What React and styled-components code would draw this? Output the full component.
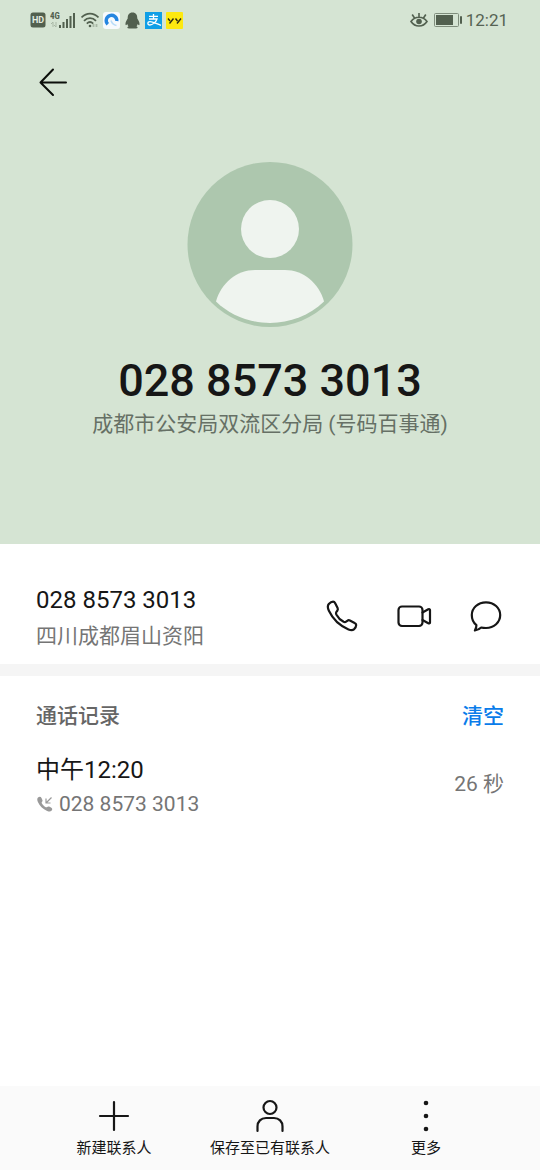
import styled, { createGlobalStyle } from "styled-components";

const acoes = [
    { nome: "语音通话", icone: <PhoneIcon /> },
    { nome: "视频通话", icone: <VideoIcon /> },
    { nome: "发送信息", icone: <MessageIcon /> },
]

const menu = [
    { nome: "新建联系人", icone: <PlusIcon /> },
    { nome: "保存至已有联系人", icone: <PersonIcon /> },
    { nome: "更多", icone: <MoreIcon /> },
]

const registros = [
    { hora: "中午12:20", numero: "028 8573 3013", duracao: "26 秒" },
]

export default function App() {
    return (
        <>
        <GlobalStyle />
        <Page>
            <Header>
                <StatusBar />
                <BackButton type="button" aria-label="返回"><BackIcon /></BackButton>
                <Profile>
                    <Avatar />
                    <Title>028 8573 3013</Title>
                    <Subtitle>成都市公安局双流区分局 (号码百事通)</Subtitle>
                </Profile>
            </Header>
            <NumberRow>
                <div>
                    <MainText>028 8573 3013</MainText>
                    <SmallText>四川成都眉山资阳</SmallText>
                </div>
                <Actions>
                    {acoes.map((acao) => (
                        <ActionButton key={acao.nome} type="button" aria-label={acao.nome}>{acao.icone}</ActionButton>
                    ))}
                </Actions>
            </NumberRow>
            <History>
                <HistoryHeader>
                    <HistoryTitle>通话记录</HistoryTitle>
                    <ClearButton type="button">清空</ClearButton>
                </HistoryHeader>
                {registros.map((registro) => (
                    <Call key={registro.hora}>
                        <div>
                            <MainText>{registro.hora}</MainText>
                            <CallNumber><IncomingIcon />{registro.numero}</CallNumber>
                        </div>
                        <SmallText>{registro.duracao}</SmallText>
                    </Call>
                ))}
            </History>
            <Footer>
                {menu.map((item) => (
                    <FooterButton key={item.nome} type="button">{item.icone}{item.nome}</FooterButton>
                ))}
            </Footer>
        </Page>
        </>
    )
}

function StatusBar() {
    return (
        <Status>
            <StatusGroup>
                <svg width="16" height="16" viewBox="0 0 16 16">
                    <rect x="0.5" y="0.5" width="15" height="15" rx="2.5" fill="#52604f" />
                    <text x="8" y="11" textAnchor="middle" fontSize="9" fontWeight="700" fill="#e2ece0">HD</text>
                </svg>
                <svg width="27" height="18" viewBox="0 0 27 18" fill="#52604f">
                    <text x="0" y="8" fontSize="9" fontWeight="700" fontFamily="Roboto Condensed, Roboto">4G</text>
                    <path d="M1 13l2-2v5M6 11v5l-2-2" fill="none" stroke="#a9b8a6" />
                    <rect x="9" y="14" width="2" height="3" />
                    <rect x="12.5" y="11" width="2" height="6" />
                    <rect x="16" y="8" width="2" height="9" />
                    <rect x="19.5" y="5" width="2" height="12" />
                    <rect x="23" y="2" width="2" height="15" />
                </svg>
                <svg width="18" height="16" viewBox="0 0 18 16" fill="none" stroke="#52604f" strokeWidth="1.8">
                    <path d="M0.5 5.5C5.5.3 12.5.3 17.5 5.5M3 8.8c3.5-3.6 8.5-3.6 12 0M5.800 11.600c2-2 4.400-2 6.400 0" />
                    <circle cx="9" cy="14" r="1.3" fill="#52604f" stroke="none" />
                    <path d="M12.5 12v3M15.5 12v3" stroke="#a9b8a6" />
                </svg>
                <svg width="17" height="17" viewBox="0 0 17 17">
                    <rect width="17" height="17" rx="3" fill="#f7fafd" />
                    <path d="M4.8 12.300A5.300 5.300 0 1 1 13.800 9" fill="none" stroke="#2686e0" strokeWidth="3.4" />
                    <path d="M8 8.500c1 3 3 4.500 5.500 5" fill="none" stroke="#b9dcf8" strokeWidth="1.6" />
                </svg>
                <svg width="17" height="17" viewBox="0 0 17 17" fill="#52604f">
                    <path d="M8.500.5C5 .5 3.600 3 3.700 6.500 2.500 8.300 1.200 10.500 1.500 12.800c.4.800 1.200.2 1.800-.8.2.9.6 1.600 1.200 2.200-1.800.7-1.500 2.300.7 2.300h6.600c2.200 0 2.500-1.600.7-2.300.6-.6 1-1.300 1.200-2.200.6 1 1.400 1.600 1.800.8.3-2.300-1-4.500-2.200-6.300C13.400 3 12 .5 8.500.5z" />
                </svg>
                <svg width="17" height="17" viewBox="0 0 17 17">
                    <rect width="17" height="17" fill="#109fe6" />
                    <path d="M4 4.300h9M8.500 2v5M4 7h8C11 10 7.500 13 4.800 13c-2.600 0-2.600-3.300.2-3.300 3 0 6 2 11 3.600" fill="none" stroke="#fff" strokeWidth="1.3" />
                </svg>
                <svg width="17" height="17" viewBox="0 0 17 17">
                    <rect width="17" height="17" rx="1" fill="#fde910" />
                    <path d="M2 6.500l2 2.500M7.500 6.500L3.500 11.500M9.500 6.500l2 2.500M15 6.500l-4 5" fill="none" stroke="#2b2a12" strokeWidth="1.4" />
                </svg>
            </StatusGroup>
            <StatusGroup>
                <svg width="18" height="16" viewBox="0 0 18 16" fill="none" stroke="#52604f" strokeWidth="1.6">
                    <path d="M1 9.500C5 3.800 13 3.800 17 9.500 13 15.500 5 15.500 1 9.500zM9 5V1M4.500 6L2.200 2.500M13.500 6l2.300-3.500" />
                    <circle cx="9" cy="9.500" r="2.8" fill="#52604f" stroke="none" />
                </svg>
                <svg width="30" height="16" viewBox="0 0 30 16">
                    <rect x="2.5" y="1.5" width="24" height="13" rx="1" fill="none" stroke="#7f8d7c" />
                    <rect x="4" y="3" width="17" height="10" fill="#52604f" />
                    <rect x="28" y="4" width="2" height="8" rx="1" fill="#52604f" />
                </svg>
                <Clock>12:21</Clock>
            </StatusGroup>
        </Status>
    )
}

function BackIcon() {
    return (
        <svg width="30" height="30" viewBox="0 0 30 30" fill="none" stroke="#0c0f0b" strokeWidth="2" strokeLinecap="round" strokeLinejoin="round">
            <path d="M15 2.500L2.500 15.500 15 28M2.500 15.500H28" />
        </svg>
    )
}

function Avatar() {
    return (
        <svg width="166" height="166" viewBox="0 0 166 166">
            <circle cx="83" cy="83.5" r="82.5" fill="#adc7ae" />
            <circle cx="83" cy="68" r="29" fill="#eff4ef" />
            <path d="M68 109H98C116 109 132 122 137 140.500C108 169 58 169 29 140.500C34 122 50 109 68 109Z" fill="#eff4ef" />
        </svg>
    )
}

function PhoneIcon() {
    return (
        <svg width="36" height="36" viewBox="0 0 36 36" {...traco}>
            <path d="M4.800 6C6 4.700 7.700 3.700 9.100 3.700c1 0 1.600.6 2.100 1.600l2.400 4.800c.5 1 .4 1.700-.3 2.600l-.9 1.200c-.6.8-.6 1.500-.1 2.500 1.700 3.200 4.200 5.700 7.300 7.400 1 .5 1.700.5 2.500-.1l1.200-.9c.9-.7 1.600-.8 2.600-.3l4.700 2.500c1 .5 1.600 1.100 1.600 2.100 0 1.400-1 3.100-2.300 4.300-1.300 1-3.200.9-5.400 0C15 27.500 9 21.500 4.900 12.800c-1.300-2.800-1.500-5.200-.1-6.800z" />
        </svg>
    )
}

function VideoIcon() {
    return (
        <svg width="36" height="36" viewBox="0 0 36 36" {...traco}>
            <rect x="2.5" y="8.5" width="24" height="19.5" rx="3.5" />
            <path d="M26.500 14.500L32.300 11.300c.9-.5 1.700-.1 1.700.8v12.300c0 .9-.8 1.300-1.700.8L26.500 22" />
        </svg>
    )
}

function MessageIcon() {
    return (
        <svg width="36" height="36" viewBox="0 0 36 36" {...traco}>
            <path d="M18 4.300c8 0 14.200 5.500 14.200 12.800S26 30 18 30c-1.800 0-3.400-.1-4.800-.5-1.700 1.600-4 2.700-6.300 3 1-1.900 1.600-3.600 1.500-5.300C5.400 24.900 3.800 21.400 3.800 17.100 3.800 9.800 10 4.300 18 4.300z" />
        </svg>
    )
}

function IncomingIcon() {
    return (
        <svg width="17" height="16" viewBox="0 0 17 16">
            <path d="M2 1.5C3.500.2 4.800.5 5.500 2l.9 2c.3.8.1 1.300-.5 1.900-.4.5-.4.9-.1 1.400 1 1.800 2.300 3 4 3.900.6.3 1 .2 1.400-.2.6-.6 1.100-.7 1.900-.4l1.900.9c1.500.7 1.700 2 .5 3.300-1 .9-2.400.9-4.300.1C6.700 13.100 3.600 10 1.900 6 1 3.900 1.100 2.500 2 1.500z" fill="#999" />
            <path d="M15.500 1.500L10 7M10 2.500V7h4.500" fill="none" stroke="#999" strokeWidth="1.2" />
        </svg>
    )
}

function PlusIcon() {
    return (
        <svg width="36" height="36" viewBox="0 0 36 36" {...traco}>
            <path d="M18 4v28M4 18h28" />
        </svg>
    )
}

function PersonIcon() {
    return (
        <svg width="36" height="36" viewBox="0 0 36 36" {...traco}>
            <circle cx="18" cy="9.5" r="6.5" />
            <path d="M5.500 33V28.500C5.500 23.500 9 20 14 20h8c5 0 8.500 3.500 8.500 8.500V33" />
        </svg>
    )
}

function MoreIcon() {
    return (
        <svg width="36" height="36" viewBox="0 0 36 36" fill="#161616">
            <circle cx="18" cy="5" r="2.3" />
            <circle cx="18" cy="18" r="2.3" />
            <circle cx="18" cy="31" r="2.3" />
        </svg>
    )
}

const traco = {
    fill: "none",
    stroke: "#161616",
    strokeWidth: 2.2,
    strokeLinecap: "round",
    strokeLinejoin: "round",
}

const GlobalStyle = createGlobalStyle`
* {
    box-sizing: border-box;
}
body, h1, h2, p {
    margin: 0;
}
body, button {
    font-family: Roboto, "Noto Sans CJK SC", sans-serif;
}
button {
    border: 0;
    padding: 0;
    background: none;
    cursor: pointer;
}
svg {
    display: block;
    flex: none;
}
`

const Page = styled.main`
min-height: 100vh;
display: flex;
flex-direction: column;
background: #fff;
color: #161616;
`

const Header = styled.header`
background: #d5e4d3;
padding-bottom: 104px;
`

const Status = styled.div`
height: 40px;
padding: 0 32px 0 30px;
display: flex;
align-items: center;
justify-content: space-between;
`

const StatusGroup = styled.div`
display: flex;
align-items: center;
gap: 4px;
`

const Clock = styled.span`
font-size: 17px;
line-height: 20px;
color: #566353;
`

const BackButton = styled.button`
display: block;
margin: 27px 0 0 38px;
`

const Profile = styled.div`
display: flex;
flex-direction: column;
align-items: center;
padding-top: 64px;
`

const Title = styled.h1`
margin-top: 27px;
font-size: 45px;
font-weight: 500;
line-height: 54px;
`

const Subtitle = styled.p`
font-size: 21px;
line-height: 32px;
color: #667065;
`

const NumberRow = styled.section`
display: flex;
align-items: center;
justify-content: space-between;
padding: 36px 36px 12px;
border-bottom: 12px solid #f5f5f5;
`

const MainText = styled.p`
font-size: 24px;
line-height: 40px;
`

const SmallText = styled.p`
font-size: 21px;
line-height: 32px;
color: #757575;
`

const Actions = styled.div`
display: flex;
gap: 36px;
`

const ActionButton = styled.button`
width: 36px;
height: 36px;
`

const History = styled.section`
flex: 1;
padding: 24px 36px;
`

const HistoryHeader = styled.div`
display: flex;
justify-content: space-between;
`

const HistoryTitle = styled.h2`
font-size: 21px;
font-weight: 500;
line-height: 32px;
color: #666;
`

const ClearButton = styled.button`
font-size: 21px;
font-weight: 500;
line-height: 32px;
color: #0a7cea;
`

const Call = styled.div`
display: flex;
align-items: center;
justify-content: space-between;
padding-top: 18px;
`

const CallNumber = styled(SmallText)`
display: flex;
align-items: center;
gap: 6px;
line-height: 28px;
`

const Footer = styled.footer`
display: grid;
grid-template-columns: repeat(3, 1fr);
padding: 12px 36px;
background: #fafafa;
`

const FooterButton = styled.button`
display: flex;
flex-direction: column;
align-items: center;
gap: 4px;
font-size: 15px;
line-height: 20px;
white-space: nowrap;
color: #161616;
`
